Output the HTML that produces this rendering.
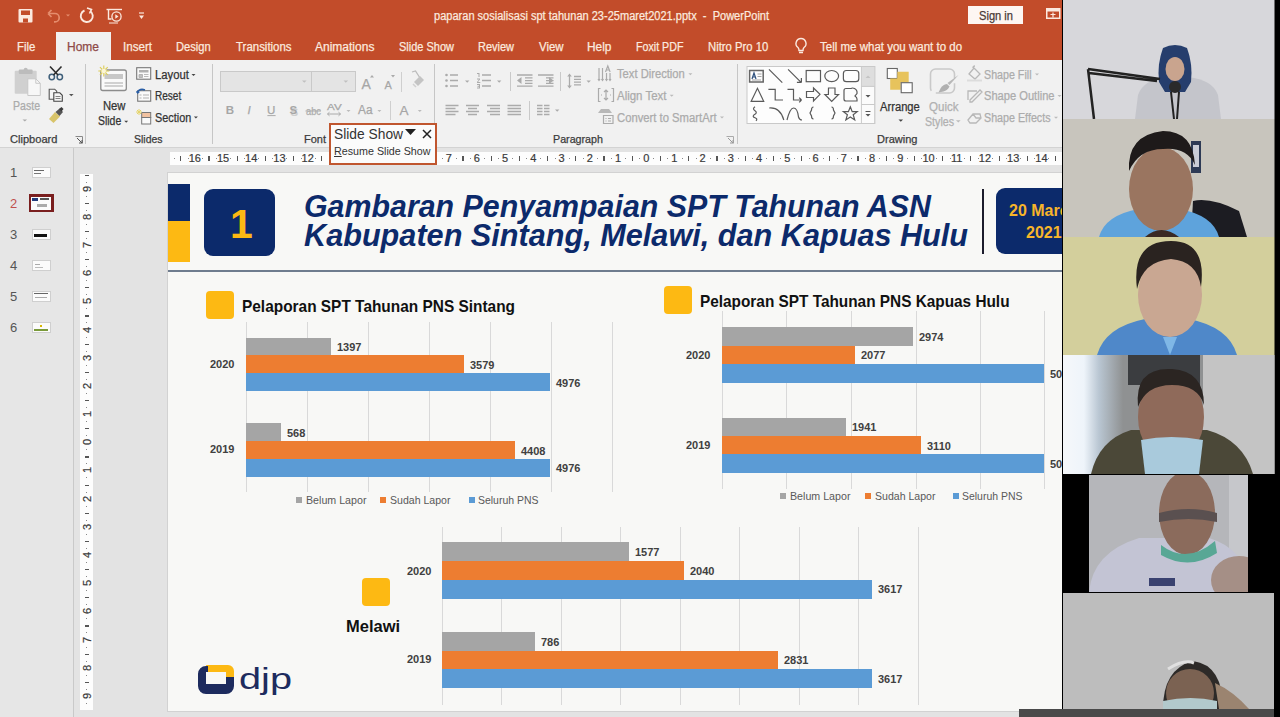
<!DOCTYPE html><html><head><meta charset="utf-8"><style>
*{margin:0;padding:0;box-sizing:border-box}
html,body{width:1280px;height:717px;overflow:hidden;background:#e3e3e3;font-family:"Liberation Sans",sans-serif}
.a{position:absolute}
.t{position:absolute;white-space:nowrap;line-height:1}
svg{position:absolute;overflow:visible}
</style></head><body><div class="a" style="left:0px;top:0px;width:1062px;height:60px;background:#c24c2a;"></div>
<svg style="left:0;top:0" width="160" height="30">
<rect x="18.5" y="9" width="14" height="13.5" rx="1" fill="#fbe9df"/>
<rect x="21" y="10.5" width="9" height="4.5" fill="#c24c2a"/>
<rect x="23" y="18.5" width="5" height="4" fill="#c24c2a"/>
<path d="M48 13.5 l3.5 -3.5 M48 13.5 l3.5 3.5 M48 13.5 h7 a4.2 4.2 0 0 1 0 8.4 h-1" stroke="#e58d6d" stroke-width="1.7" fill="none"/>
<path d="M66 14.5 l2 2 l2 -2z" fill="#e58d6d"/>
<path d="M84.5 10.5 a6 6 0 1 0 5.5 0.5" stroke="#fbe9df" stroke-width="1.9" fill="none"/>
<path d="M87 8 l4.5 1.5 l-2 4" stroke="#fbe9df" stroke-width="1.6" fill="none"/>
<path d="M106.5 9.5 h15.5" stroke="#fbe9df" stroke-width="1.4"/>
<path d="M108.5 10 v9 h3" stroke="#fbe9df" stroke-width="1.4" fill="none"/>
<circle cx="116.5" cy="16.5" r="4.6" stroke="#fbe9df" stroke-width="1.3" fill="none"/>
<path d="M115.3 14.2 l3.2 2.3 l-3.2 2.3z" fill="#fbe9df"/>
<path d="M109 23 h9" stroke="#fbe9df" stroke-width="1"/>
<path d="M139 13 h5" stroke="#fbe9df" stroke-width="1.2"/><path d="M139 15.5 l2.5 3.5 l2.5 -3.5z" fill="#fbe9df"/>
</svg>
<div class="t" style="left:434px;top:9.6px;font-size:12px;color:#fbe9df;font-weight:normal;font-style:normal;transform:scaleX(0.9200);transform-origin:0 0;-webkit-text-stroke:0.25px currentColor;">paparan sosialisasi spt tahunan 23-25maret2021.pptx&nbsp; -&nbsp; PowerPoint</div>
<div class="a" style="left:968px;top:6px;width:54.5px;height:17.5px;background:#fdf6f2;"></div>
<div class="t" style="left:978.5px;top:9.9px;font-size:12px;color:#4a3a36;font-weight:normal;font-style:normal;transform:scaleX(0.9267);transform-origin:0 0;-webkit-text-stroke:0.25px currentColor;">Sign in</div>
<svg style="left:1046px;top:8px" width="16" height="12"><rect x="0.75" y="0.75" width="13" height="9.5" fill="none" stroke="#fbe9df" stroke-width="1.5"/><rect x="0.5" y="0.5" width="13.5" height="3" fill="#fbe9df"/><path d="M4.5 6.5 h5 M7 4.5 v5" stroke="#fbe9df" stroke-width="1.2"/></svg>
<div class="a" style="left:56px;top:32px;width:55px;height:28px;background:#f1f1f1;"></div>
<div class="t" style="left:16.5px;top:40.7px;font-size:12px;color:#fbe9df;font-weight:normal;font-style:normal;transform:scaleX(0.9512);transform-origin:0 0;-webkit-text-stroke:0.25px currentColor;">File</div>
<div class="t" style="left:67.0px;top:40.7px;font-size:12px;color:#8e4a48;font-weight:normal;font-style:normal;transform:scaleX(0.9995);transform-origin:0 0;-webkit-text-stroke:0.25px currentColor;">Home</div>
<div class="t" style="left:122.9px;top:40.7px;font-size:12px;color:#fbe9df;font-weight:normal;font-style:normal;transform:scaleX(0.9667);transform-origin:0 0;-webkit-text-stroke:0.25px currentColor;">Insert</div>
<div class="t" style="left:176.1px;top:40.7px;font-size:12px;color:#fbe9df;font-weight:normal;font-style:normal;transform:scaleX(0.9288);transform-origin:0 0;-webkit-text-stroke:0.25px currentColor;">Design</div>
<div class="t" style="left:235.5px;top:40.7px;font-size:12px;color:#fbe9df;font-weight:normal;font-style:normal;transform:scaleX(0.9545);transform-origin:0 0;-webkit-text-stroke:0.25px currentColor;">Transitions</div>
<div class="t" style="left:315.1px;top:40.7px;font-size:12px;color:#fbe9df;font-weight:normal;font-style:normal;transform:scaleX(1.0007);transform-origin:0 0;-webkit-text-stroke:0.25px currentColor;">Animations</div>
<div class="t" style="left:398.5px;top:40.7px;font-size:12px;color:#fbe9df;font-weight:normal;font-style:normal;transform:scaleX(0.9162);transform-origin:0 0;-webkit-text-stroke:0.25px currentColor;">Slide Show</div>
<div class="t" style="left:477.5px;top:40.7px;font-size:12px;color:#fbe9df;font-weight:normal;font-style:normal;transform:scaleX(0.9146);transform-origin:0 0;-webkit-text-stroke:0.25px currentColor;">Review</div>
<div class="t" style="left:538.5px;top:40.7px;font-size:12px;color:#fbe9df;font-weight:normal;font-style:normal;transform:scaleX(0.9497);transform-origin:0 0;-webkit-text-stroke:0.25px currentColor;">View</div>
<div class="t" style="left:587.0px;top:40.7px;font-size:12px;color:#fbe9df;font-weight:normal;font-style:normal;transform:scaleX(0.9924);transform-origin:0 0;-webkit-text-stroke:0.25px currentColor;">Help</div>
<div class="t" style="left:636.1px;top:40.7px;font-size:12px;color:#fbe9df;font-weight:normal;font-style:normal;transform:scaleX(0.8888);transform-origin:0 0;-webkit-text-stroke:0.25px currentColor;">Foxit PDF</div>
<div class="t" style="left:708.2px;top:40.7px;font-size:12px;color:#fbe9df;font-weight:normal;font-style:normal;transform:scaleX(0.9420);transform-origin:0 0;-webkit-text-stroke:0.25px currentColor;">Nitro Pro 10</div>
<svg style="left:794px;top:37px" width="16" height="18"><path d="M7 1.5 a5 5 0 0 0 -3 9 q1 1 1 3 h4 q0 -2 1 -3 a5 5 0 0 0 -3 -9z M5 15.5 h4" stroke="#fbe9df" stroke-width="1.4" fill="none"/></svg>
<div class="t" style="left:820px;top:40.7px;font-size:12px;color:#fbe9df;font-weight:normal;font-style:normal;transform:scaleX(0.9593);transform-origin:0 0;-webkit-text-stroke:0.25px currentColor;">Tell me what you want to do</div>
<div class="a" style="left:0px;top:60px;width:1062px;height:87px;background:#f1f1f1;"></div>
<div class="a" style="left:0px;top:147px;width:1062px;height:1.5px;background:#d3d3d3;"></div>
<div class="a" style="left:85px;top:64px;width:1px;height:80px;background:#c6c6c6;"></div>
<div class="a" style="left:212px;top:64px;width:1px;height:80px;background:#c6c6c6;"></div>
<div class="a" style="left:434px;top:64px;width:1px;height:80px;background:#c6c6c6;"></div>
<div class="a" style="left:737px;top:64px;width:1px;height:80px;background:#c6c6c6;"></div>
<div class="t" style="left:10px;top:134.4px;font-size:11px;color:#3c3c3c;font-weight:normal;font-style:normal;transform:scaleX(1.0086);transform-origin:0 0;-webkit-text-stroke:0.25px currentColor;">Clipboard</div>
<div class="t" style="left:134px;top:134.4px;font-size:11px;color:#3c3c3c;font-weight:normal;font-style:normal;transform:scaleX(0.9510);transform-origin:0 0;-webkit-text-stroke:0.25px currentColor;">Slides</div>
<div class="t" style="left:304.4px;top:134.4px;font-size:11px;color:#3c3c3c;font-weight:normal;font-style:normal;transform:scaleX(0.9986);transform-origin:0 0;-webkit-text-stroke:0.25px currentColor;">Font</div>
<div class="t" style="left:553px;top:134.4px;font-size:11px;color:#3c3c3c;font-weight:normal;font-style:normal;transform:scaleX(0.9726);transform-origin:0 0;-webkit-text-stroke:0.25px currentColor;">Paragraph</div>
<div class="t" style="left:877.2px;top:134.4px;font-size:11px;color:#3c3c3c;font-weight:normal;font-style:normal;transform:scaleX(1.0039);transform-origin:0 0;-webkit-text-stroke:0.25px currentColor;">Drawing</div>
<svg style="left:75px;top:136px" width="9" height="9"><path d="M0.5 0.5 h7 v7" stroke="#888" fill="none"/><path d="M2 2 l5 5 M4 7 h3 v-3" stroke="#555" fill="none"/></svg>
<svg style="left:726px;top:136px" width="9" height="9"><path d="M0.5 0.5 h7 v7" stroke="#aaa" fill="none"/><path d="M2 2 l5 5 M4 7 h3 v-3" stroke="#999" fill="none"/></svg>
<svg style="left:0;top:0" width="90" height="130">
<rect x="14.7" y="70.7" width="22" height="23" rx="1" fill="#d0d0d0"/>
<rect x="18.8" y="69.5" width="13.8" height="4.5" rx="1" fill="#bcbcbc"/>
<circle cx="25.7" cy="69.8" r="2" fill="#bcbcbc"/>
<path d="M27.8 78.8 h8 l4.5 4.5 v12.2 h-12.5z" fill="#f7f7f7" stroke="#c8c8c8" stroke-width="1"/>
<path d="M35.8 78.8 v4.5 h4.5" fill="none" stroke="#c8c8c8"/>
<circle cx="51.8" cy="77" r="2.7" fill="none" stroke="#3f5f7a" stroke-width="1.5"/>
<circle cx="59.8" cy="77" r="2.7" fill="none" stroke="#3f5f7a" stroke-width="1.5"/>
<path d="M50 66.5 l8 8.5 M61.5 66.5 l-8 8.5" stroke="#2c2c2c" stroke-width="1.6"/>
<path d="M49.2 89.2 h5.5 l2 2 v8 h-7.5z" fill="#f5f5f5" stroke="#555" stroke-width="1.1"/>
<path d="M53.8 92.8 h6 l2.5 2.5 v6 h-8.5z" fill="#f5f5f5" stroke="#444" stroke-width="1.1"/>
<path d="M55.5 96.5 h5 M55.5 98.5 h5" stroke="#666" stroke-width="0.8"/>
<path d="M69 94 l2.3 2.3 l2.3 -2.3z" fill="#555"/>
<path d="M49 119 l6 -7 l5 4.5 l-6.5 6.5z" fill="#d8c46a"/>
<path d="M55.5 112 l4 -3.5 l3.5 3.5 l-3.5 4z" fill="#555"/>
<path d="M59 109 l2.5 -2 l2 2 l-2 2.5z" fill="#3a3a3a"/>
<path d="M22.5 119.6 l2.3 2 l2.3 -2z" fill="#aaa"/>
</svg>
<div class="t" style="left:12.8px;top:100.4px;font-size:12px;color:#ababab;font-weight:normal;font-style:normal;transform:scaleX(0.8803);transform-origin:0 0;-webkit-text-stroke:0.25px currentColor;">Paste</div>
<svg style="left:0;top:0" width="215" height="130">
<rect x="100.8" y="70" width="25.5" height="20.5" rx="2" fill="#fafafa" stroke="#8c8c8c" stroke-width="1.3"/>
<rect x="104.5" y="74" width="18.5" height="5" fill="#c8c8c8"/>
<path d="M104.5 83 h18.5 M104.5 86 h18.5" stroke="#a8a8a8" stroke-width="1"/>
<circle cx="103.8" cy="71" r="3" fill="#f2eec5"/>
<g stroke="#dccb55" stroke-width="1.1"><path d="M103.8 65.5 v11 M98.3 71 h11 M99.9 67.1 l7.8 7.8 M107.7 67.1 l-7.8 7.8"/></g>
<circle cx="103.8" cy="71" r="2.2" fill="#fbf6d8"/>
<rect x="136.7" y="67.7" width="14" height="11.5" fill="#fafafa" stroke="#777" stroke-width="1.1"/>
<rect x="139" y="70" width="9.5" height="2.5" fill="#b0b0b0"/>
<path d="M139 74.5 h3.5 v3 h-3.5z M144 74.5 h4.5 M144 76.5 h4.5" fill="#c0c0c0" stroke="#aaa" stroke-width="0.8"/>
<rect x="137.7" y="90.7" width="13" height="10.5" fill="#fafafa" stroke="#777" stroke-width="1.1"/>
<path d="M139.5 95 h2 M143 95 h6 M139.5 98 h2 M143 98 h6" stroke="#aaa" stroke-width="0.9"/>
<path d="M137 93 q2.5 -5 8 -3" stroke="#2a5ea5" stroke-width="1.6" fill="none"/>
<path d="M136 91 l1.5 3 l2.5 -2z" fill="#2a5ea5"/>
<rect x="141.7" y="112.5" width="9" height="5" fill="#f2c2a0" stroke="#777" stroke-width="1"/>
<rect x="141.7" y="117.5" width="9" height="6.5" fill="#fafafa" stroke="#777" stroke-width="1"/>
<g stroke="#e5d46a" stroke-width="1"><path d="M139 109 v6 M136 112 h6 M137 110 l4 4 M141 110 l-4 4"/></g>
<path d="M124.2 120.8 l2 2 l2 -2z M191.5 73.9 l2 2 l2 -2z M193.9 116.5 l2 2 l2 -2z" fill="#444"/>
</svg>
<div class="t" style="left:102.8px;top:99.9px;font-size:12px;color:#333;font-weight:normal;font-style:normal;transform:scaleX(0.9369);transform-origin:0 0;-webkit-text-stroke:0.25px currentColor;">New</div>
<div class="t" style="left:98px;top:115.1px;font-size:12px;color:#333;font-weight:normal;font-style:normal;transform:scaleX(0.8693);transform-origin:0 0;-webkit-text-stroke:0.25px currentColor;">Slide</div>
<div class="t" style="left:154.5px;top:68.6px;font-size:12px;color:#333;font-weight:normal;font-style:normal;transform:scaleX(0.9385);transform-origin:0 0;-webkit-text-stroke:0.25px currentColor;">Layout</div>
<div class="t" style="left:154.5px;top:90.0px;font-size:12px;color:#333;font-weight:normal;font-style:normal;transform:scaleX(0.8359);transform-origin:0 0;-webkit-text-stroke:0.25px currentColor;">Reset</div>
<div class="t" style="left:154.5px;top:111.8px;font-size:12px;color:#333;font-weight:normal;font-style:normal;transform:scaleX(0.9046);transform-origin:0 0;-webkit-text-stroke:0.25px currentColor;">Section</div>
<div class="a" style="left:220.4px;top:70.6px;width:92px;height:21.2px;background:#e4e4e4;border:1px solid #c9c9c9"></div>
<div class="a" style="left:311.4px;top:70.6px;width:44.2px;height:21.2px;background:#e4e4e4;border:1px solid #c9c9c9"></div>
<svg style="left:0;top:0" width="440" height="130">
<path d="M302 80.5 l2.3 2.3 l2.3 -2.3z M343.5 80.5 l2.3 2.3 l2.3 -2.3z" fill="#c0c0c0"/>
<path d="M370 77.5 l2 -2.5 l2 2.5z M391 75 l2 2.5 l2 -2.5z" fill="#aaa"/>
<path d="M412 72 l3.5 -1 l4.5 7" stroke="#bbb" stroke-width="1.3" fill="none"/>
<path d="M414 82 l6 -6 l4 4 l-6 6z" fill="#c4c4c4"/>
<path d="M413 84 l3 3" stroke="#d0d0d0" stroke-width="1.5"/>
<path d="M346.5 110 l2 2 l2 -2z M377.4 110 l2 2 l2 -2z M417.8 110 l2 2 l2 -2z" fill="#bbb"/>
<path d="M327.5 114 h13 M327.5 114 l2 -1.8 M327.5 114 l2 1.8 M340.5 114 l-2 -1.8 M340.5 114 l-2 1.8" stroke="#aaa" stroke-width="1" fill="none"/>
<path d="M267.4 115.6 h8.2" stroke="#aaa" stroke-width="1"/>
<path d="M305.5 111 h15.5" stroke="#aaa" stroke-width="1"/>
</svg>
<div class="t" style="left:361.5px;top:77.3px;font-size:14px;color:#a6a6a6;font-weight:normal;font-style:normal;-webkit-text-stroke:0.25px currentColor;">A</div>
<div class="t" style="left:384.5px;top:79.7px;font-size:11px;color:#a6a6a6;font-weight:normal;font-style:normal;-webkit-text-stroke:0.25px currentColor;">A</div>
<div class="a" style="left:401.4px;top:72px;width:1px;height:20px;background:#cfcfcf;"></div>
<div class="t" style="left:225.8px;top:104.8px;font-size:11.5px;color:#a6a6a6;font-weight:bold;font-style:normal;">B</div>
<div class="t" style="left:247.5px;top:104.8px;font-size:11.5px;color:#a6a6a6;font-weight:normal;font-style:italic;-webkit-text-stroke:0.25px currentColor;">I</div>
<div class="t" style="left:267px;top:104.8px;font-size:11.5px;color:#a6a6a6;font-weight:normal;font-style:normal;-webkit-text-stroke:0.25px currentColor;">U</div>
<div class="t" style="left:289.5px;top:104.8px;font-size:11.5px;color:#a6a6a6;font-weight:bold;font-style:normal;text-shadow:1px 1.5px 0 #cfcfcf;">S</div>
<div class="t" style="left:305.8px;top:105.6px;font-size:10.5px;color:#adadad;font-weight:normal;font-style:normal;transform:scaleX(0.8856);transform-origin:0 0;-webkit-text-stroke:0.25px currentColor;">abc</div>
<div class="t" style="left:326.7px;top:103.4px;font-size:9px;color:#a6a6a6;font-weight:normal;font-style:normal;transform:scaleX(1.2888);transform-origin:0 0;-webkit-text-stroke:0.25px currentColor;">AV</div>
<div class="t" style="left:357.5px;top:104.4px;font-size:12px;color:#a6a6a6;font-weight:normal;font-style:normal;transform:scaleX(0.9883);transform-origin:0 0;-webkit-text-stroke:0.25px currentColor;">Aa</div>
<div class="t" style="left:399.5px;top:104.0px;font-size:13.5px;color:#a6a6a6;font-weight:normal;font-style:normal;-webkit-text-stroke:0.25px currentColor;">A</div>
<div class="a" style="left:390.3px;top:101px;width:1px;height:19px;background:#cfcfcf;"></div>
<svg style="left:0;top:0" width="760" height="130" stroke="#ababab" fill="none">
<g stroke-width="1.3">
<path d="M450 75 h8 M450 80.5 h8 M450 86 h8"/>
<path d="M482 75 h9 M482 80.5 h9 M482 86 h9"/>
<path d="M517 75 h15.5 M525 77.8 h7.5 M525 80.6 h7.5 M525 83.4 h7.5 M517 86.2 h15.5"/>
<path d="M538 75 h15.5 M546 77.8 h7.5 M546 80.6 h7.5 M546 83.4 h7.5 M538 86.2 h15.5"/>
<path d="M574 76.5 h7 M574 79.3 h7 M574 82.1 h7 M574 84.9 h7 M569.5 75 v12"/>
<path d="M445.5 105.5 h13 M445.5 108.5 h10 M445.5 111.5 h13 M445.5 114.5 h10"/>
<path d="M466 105.5 h13 M468 108.5 h9 M466 111.5 h13 M468 114.5 h9"/>
<path d="M487 105.5 h13 M490 108.5 h10 M487 111.5 h13 M490 114.5 h10"/>
<path d="M507.5 105.5 h13.5 M507.5 108.5 h13.5 M507.5 111.5 h13.5 M507.5 114.5 h13.5"/>
<path d="M537 105.5 h5.5 M544 105.5 h5.5 M537 108.5 h5.5 M544 108.5 h5.5 M537 111.5 h5.5 M544 111.5 h5.5 M537 114.5 h5.5 M544 114.5 h5.5"/>
</g>
<g fill="#ababab" stroke="none">
<circle cx="446.5" cy="75" r="1.3"/><circle cx="446.5" cy="80.5" r="1.3"/><circle cx="446.5" cy="86" r="1.3"/>
<path d="M477 73 h2.5 v4 h-1 v-3 h-1.5z M477 78.5 h3 v1 l-2 2.5 h2.3 v1 h-3.3 v-1 l2 -2.5 h-2z M477 84 h3 v4.5 h-3 v-1 h2 v-0.8 h-1.5 v-0.9 h1.5 v-0.8 h-2z"/>
<path d="M517 80.6 l4.5 -3.5 v7z M553.5 80.6 l-4.5 -3.5 v7z"/>
<path d="M569.5 73.5 l-2.3 3 h4.6z M569.5 88.5 l-2.3 -3 h4.6z"/>
<path d="M465 80.5 l2.2 2.2 l2.2 -2.2z M497 80.5 l2.2 2.2 l2.2 -2.2z M586.5 80.5 l2.2 2.2 l2.2 -2.2z M555 109.5 l2.2 2.2 l2.2 -2.2z"/>
</g>
<g stroke="#c9c9c9" stroke-width="1"><path d="M510.5 72 v19 M560.5 72 v19 M529.5 101 v19"/></g>
<g stroke-width="1.2">
<path d="M599 68 v12 M602.5 68 v12 M606.5 73 v7 M610 73 v7"/>
<path d="M598 79 l1 1.5 l1 -1.5 M601.5 79 l1 1.5 l1 -1.5 M605.5 79 l1 1.5 l1 -1.5 M609 79 l1 1.5 l1 -1.5"/>
<path d="M605.5 72 l2.3 -6 l2.3 6 M606.3 70 h3"/>
<path d="M600.5 88.5 h-2 v13 h2 M611.5 88.5 h2 v13 h-2"/>
<path d="M606 90 v10 M604 92 l2 -2 l2 2 M604 98 l2 2 l2 -2 M601 95 h1 M610 95 h1"/>
<path d="M603.5 115.5 h9.5 v8 h-9.5z M605.5 118.5 h1 M608 118.5 h3 M605.5 121 h1 M608 121 h3"/>
</g>
<path d="M598 113 l3 -4 h8 l3 4z" fill="#b8b8b8" stroke="none"/>
<path d="M688.4 73.2 l2 2 l2 -2z M669.7 94.8 l2 2 l2 -2z M720 116.6 l2 2 l2 -2z" fill="#bbb" stroke="none"/>
</svg>
<div class="t" style="left:617px;top:68.4px;font-size:12px;color:#ababab;font-weight:normal;font-style:normal;transform:scaleX(0.9328);transform-origin:0 0;-webkit-text-stroke:0.25px currentColor;">Text Direction</div>
<div class="t" style="left:617.2px;top:90.1px;font-size:12px;color:#ababab;font-weight:normal;font-style:normal;transform:scaleX(0.9557);transform-origin:0 0;-webkit-text-stroke:0.25px currentColor;">Align Text</div>
<div class="t" style="left:617px;top:111.8px;font-size:12px;color:#ababab;font-weight:normal;font-style:normal;transform:scaleX(0.9387);transform-origin:0 0;-webkit-text-stroke:0.25px currentColor;">Convert to SmartArt</div>
<svg style="left:0;top:0" width="1062" height="130">
<rect x="747" y="66.5" width="127.7" height="57" fill="#fdfdfd" stroke="#c9c9c9"/>
<rect x="861.4" y="66.5" width="13.3" height="57" fill="#fbfbfb" stroke="#c9c9c9"/>
<rect x="862" y="67" width="12.2" height="19.4" fill="#dedede"/>
<path d="M861.4 86.4 h13.3 M861.4 104.5 h13.3" stroke="#c9c9c9"/>
<path d="M865.5 78 l2.5 -2.5 l2.5 2.5z" fill="#c4c4c4"/>
<path d="M865.5 95 l2.5 2.5 l2.5 -2.5z M865.5 114 l2.5 2.5 l2.5 -2.5z" fill="#555"/>
<path d="M865.5 111.5 h5" stroke="#555" stroke-width="1"/>
<g stroke="#5a5a5a" fill="none" stroke-width="1.2">
<rect x="749.6" y="70.5" width="13.6" height="11.5" stroke="#666" stroke-width="1.5"/>
<path d="M752 79 l2 -6 l2 6 M752.8 77 h2.5" stroke="#2d4f7c" stroke-width="1.2"/>
<path d="M757.5 74 h4 M757.5 76.5 h4 M752 80 h9" stroke="#999" stroke-width="0.9"/>
<path d="M769 69.4 l13.3 13.3"/>
<path d="M788.1 69.4 l13 13 M801.4 82.4 v-4.5 M801.4 82.4 h-4.5"/>
<rect x="806.2" y="70.5" width="14.3" height="11.2"/>
<ellipse cx="831.7" cy="76.1" rx="6.9" ry="5.6"/>
<rect x="843.4" y="70.5" width="15.4" height="11.2" rx="3"/>
<path d="M751.2 101.3 l6.25 -13 l6.25 13z"/>
<path d="M768.4 89.4 h6.8 v10.6 h7.8"/>
<path d="M787.5 89.4 h6 v10.6 h8 M801.5 100 l-2.3 -2.3 M801.5 100 l-2.3 2.3"/>
<path d="M806.5 91.5 h7 v-3.5 l6.5 6.3 l-6.5 6.7 v-3.5 h-7z"/>
<path d="M828.5 88 h6.5 v6.5 h3.5 l-6.8 6.8 l-6.8 -6.8 h3.5z"/>
<path d="M844 90.5 q0 -2 2 -2 h5 q1.5 -1 3.5 0 q3 1.5 2.5 5 l-2 2.5 q2 1.5 2 3 v2 h-11 q-2 0 -2 -2z"/>
<path d="M755 106.8 q-3 2 0 4 q3 2 -1 4 q-2 2 1 3 q3 1 1 3"/>
<path d="M769.2 108 q11 -1 14.6 12"/>
<path d="M787 120 q3 -12 6.5 -12 q4 0 5 9 q1 3 3.5 3"/>
<path d="M813.5 107 q-2 0 -2 3 l-1.5 3 l1.5 3 q0 3 2 3"/>
<path d="M831.5 107 q2 0 2 3 l1.5 3 l-1.5 3 q0 3 -2 3"/>
<path d="M850.3 106.8 l1.9 4.8 h5 l-4 3.1 l1.5 5.2 l-4.4 -3 l-4.4 3 l1.5 -5.2 l-4 -3.1 h5z"/>
</g>
<rect x="887.3" y="68.5" width="10" height="10" fill="#fff" stroke="#666" stroke-width="1.1"/>
<path d="M890.2 78.5 v11.2 h10.5 v-7 h8 v-11 h-11.4 v6.8z" fill="#e7c35c"/>
<rect x="901.2" y="82.7" width="11" height="10" fill="#fff" stroke="#666" stroke-width="1.1"/>
<path d="M898.5 119.5 l2.3 2.3 l2.3 -2.3z" fill="#444"/>
<rect x="930.5" y="69" width="24" height="24" rx="5" fill="none" stroke="#c9c9c9" stroke-width="1.6" stroke-dasharray="26 5"/>
<path d="M958.5 75 l-9 10 l-2 -2 z" fill="#b8b8b8"/>
<path d="M947 84 l2.5 2.5 q-2 4 -6 5 l-5 1 l2 -4 q2 -4 6.5 -4.5z" fill="#b0b0b0"/>
<path d="M956 120.3 l2.3 2.3 l2.3 -2.3z" fill="#bbb"/>
<g stroke="#b8b8b8" fill="none" stroke-width="1.3">
<path d="M969 74 l5 -6 l6 6 l-5 5z M973 68 q0 -2 2 -2"/>
<path d="M967 80.5 h15" stroke="#dcdcdc" stroke-width="2"/>
<path d="M968 100 v-9 h9 M970 100 l10 -10 l2 2 l-10 10 h-2z"/>
<path d="M968 120 l5 -6 h7 l1 4 l-5 5 h-6z M973 114 l3 4 h5"/>
</g>
<path d="M1035 73.5 l2 2 l2 -2z M1057.5 95 l2 2 l2 -2z M1054 116.8 l2 2 l2 -2z" fill="#bbb"/>
</svg>
<div class="t" style="left:880.2px;top:100.6px;font-size:12px;color:#333;font-weight:normal;font-style:normal;transform:scaleX(0.9324);transform-origin:0 0;-webkit-text-stroke:0.25px currentColor;">Arrange</div>
<div class="t" style="left:928.5px;top:100.6px;font-size:12px;color:#b0b0b0;font-weight:normal;font-style:normal;transform:scaleX(0.9618);transform-origin:0 0;-webkit-text-stroke:0.25px currentColor;">Quick</div>
<div class="t" style="left:924.7px;top:115.6px;font-size:12px;color:#b0b0b0;font-weight:normal;font-style:normal;transform:scaleX(0.8876);transform-origin:0 0;-webkit-text-stroke:0.25px currentColor;">Styles</div>
<div class="t" style="left:984px;top:69.0px;font-size:12px;color:#acacac;font-weight:normal;font-style:normal;transform:scaleX(0.8902);transform-origin:0 0;-webkit-text-stroke:0.25px currentColor;">Shape Fill</div>
<div class="t" style="left:984px;top:90.1px;font-size:12px;color:#acacac;font-weight:normal;font-style:normal;transform:scaleX(0.9273);transform-origin:0 0;-webkit-text-stroke:0.25px currentColor;">Shape Outline</div>
<div class="t" style="left:984px;top:111.8px;font-size:12px;color:#acacac;font-weight:normal;font-style:normal;transform:scaleX(0.8932);transform-origin:0 0;-webkit-text-stroke:0.25px currentColor;">Shape Effects</div>
<div class="a" style="left:0px;top:148px;width:73px;height:569px;background:#e6e6e6;"></div>
<div class="a" style="left:73px;top:148px;width:1px;height:569px;background:#c9c9c9;"></div>
<div class="a" style="left:74px;top:148px;width:988px;height:569px;background:#e3e3e3;"></div>
<div class="t" style="left:10px;top:165.6px;font-size:13px;color:#555;font-weight:normal;font-style:normal;">1</div>
<div class="a" style="left:32px;top:167px;width:19px;height:11px;background:#fbfbfb;border:1px solid #cfcfcf"></div>
<div class="a" style="left:34px;top:170px;width:10px;height:1px;background:#666;"></div>
<div class="a" style="left:34px;top:173px;width:7px;height:1px;background:#777;"></div>
<div class="t" style="left:10px;top:196.6px;font-size:13px;color:#c0504d;font-weight:normal;font-style:normal;">2</div>
<div class="a" style="left:28.5px;top:194px;width:25px;height:18px;background:#7a1f1f;"></div>
<div class="a" style="left:31px;top:196.5px;width:20px;height:13px;background:#fbfbfb;"></div>
<div class="a" style="left:32px;top:198px;width:6px;height:3px;background:#223b7a;"></div>
<div class="a" style="left:40px;top:198px;width:9px;height:2px;background:#555;"></div>
<div class="a" style="left:37px;top:204px;width:10px;height:3px;background:#aaa;"></div>
<div class="t" style="left:10px;top:227.6px;font-size:13px;color:#555;font-weight:normal;font-style:normal;">3</div>
<div class="a" style="left:32px;top:229px;width:19px;height:11px;background:#fbfbfb;border:1px solid #cfcfcf"></div>
<div class="a" style="left:34px;top:234px;width:13px;height:3px;background:#111;"></div>
<div class="t" style="left:10px;top:258.6px;font-size:13px;color:#555;font-weight:normal;font-style:normal;">4</div>
<div class="a" style="left:32px;top:260px;width:19px;height:11px;background:#fbfbfb;border:1px solid #cfcfcf"></div>
<div class="a" style="left:35px;top:264px;width:5px;height:1px;background:#aaa;"></div>
<div class="a" style="left:35px;top:267px;width:8px;height:1px;background:#bbb;"></div>
<div class="t" style="left:10px;top:289.6px;font-size:13px;color:#555;font-weight:normal;font-style:normal;">5</div>
<div class="a" style="left:32px;top:291px;width:19px;height:11px;background:#fbfbfb;border:1px solid #cfcfcf"></div>
<div class="a" style="left:34px;top:293px;width:14px;height:1px;background:#666;"></div>
<div class="a" style="left:35px;top:297px;width:12px;height:1px;background:#aaa;"></div>
<div class="t" style="left:10px;top:320.6px;font-size:13px;color:#555;font-weight:normal;font-style:normal;">6</div>
<div class="a" style="left:32px;top:322px;width:19px;height:11px;background:#fbfbfb;border:1px solid #cfcfcf"></div>
<div class="a" style="left:34px;top:329px;width:14px;height:2px;background:#7a9a3a;"></div>
<div class="a" style="left:40px;top:325px;width:2px;height:2px;background:#d9b800;"></div>
<div class="a" style="left:170px;top:152px;width:892px;height:13px;background:#fdfdfd;"></div>
<div class="a" style="left:173.5px;top:158px;width:1px;height:1px;background:#888"></div>
<div class="a" style="left:180.1px;top:156px;width:1.3px;height:4.5px;background:#555"></div>
<div class="a" style="left:187.6px;top:158px;width:1px;height:1px;background:#888"></div>
<div class="t" style="left:188.7px;top:153.3px;font-size:11px;color:#3a3a3a;width:12px;text-align:center;-webkit-text-stroke:0.2px #3a3a3a">16</div>
<div class="a" style="left:201.7px;top:158px;width:1px;height:1px;background:#888"></div>
<div class="a" style="left:208.3px;top:156px;width:1.3px;height:4.5px;background:#555"></div>
<div class="a" style="left:215.8px;top:158px;width:1px;height:1px;background:#888"></div>
<div class="t" style="left:216.9px;top:153.3px;font-size:11px;color:#3a3a3a;width:12px;text-align:center;-webkit-text-stroke:0.2px #3a3a3a">15</div>
<div class="a" style="left:230.0px;top:158px;width:1px;height:1px;background:#888"></div>
<div class="a" style="left:236.5px;top:156px;width:1.3px;height:4.5px;background:#555"></div>
<div class="a" style="left:244.1px;top:158px;width:1px;height:1px;background:#888"></div>
<div class="t" style="left:245.1px;top:153.3px;font-size:11px;color:#3a3a3a;width:12px;text-align:center;-webkit-text-stroke:0.2px #3a3a3a">14</div>
<div class="a" style="left:258.2px;top:158px;width:1px;height:1px;background:#888"></div>
<div class="a" style="left:264.7px;top:156px;width:1.3px;height:4.5px;background:#555"></div>
<div class="a" style="left:272.3px;top:158px;width:1px;height:1px;background:#888"></div>
<div class="t" style="left:273.3px;top:153.3px;font-size:11px;color:#3a3a3a;width:12px;text-align:center;-webkit-text-stroke:0.2px #3a3a3a">13</div>
<div class="a" style="left:286.4px;top:158px;width:1px;height:1px;background:#888"></div>
<div class="a" style="left:293.0px;top:156px;width:1.3px;height:4.5px;background:#555"></div>
<div class="a" style="left:300.5px;top:158px;width:1px;height:1px;background:#888"></div>
<div class="t" style="left:301.6px;top:153.3px;font-size:11px;color:#3a3a3a;width:12px;text-align:center;-webkit-text-stroke:0.2px #3a3a3a">12</div>
<div class="a" style="left:314.6px;top:158px;width:1px;height:1px;background:#888"></div>
<div class="a" style="left:321.2px;top:156px;width:1.3px;height:4.5px;background:#555"></div>
<div class="a" style="left:328.7px;top:158px;width:1px;height:1px;background:#888"></div>
<div class="t" style="left:329.8px;top:153.3px;font-size:11px;color:#3a3a3a;width:12px;text-align:center;-webkit-text-stroke:0.2px #3a3a3a">11</div>
<div class="a" style="left:342.8px;top:158px;width:1px;height:1px;background:#888"></div>
<div class="a" style="left:349.4px;top:156px;width:1.3px;height:4.5px;background:#555"></div>
<div class="a" style="left:356.9px;top:158px;width:1px;height:1px;background:#888"></div>
<div class="t" style="left:358.0px;top:153.3px;font-size:11px;color:#3a3a3a;width:12px;text-align:center;-webkit-text-stroke:0.2px #3a3a3a">10</div>
<div class="a" style="left:371.1px;top:158px;width:1px;height:1px;background:#888"></div>
<div class="a" style="left:377.6px;top:156px;width:1.3px;height:4.5px;background:#555"></div>
<div class="a" style="left:385.2px;top:158px;width:1px;height:1px;background:#888"></div>
<div class="t" style="left:386.2px;top:153.3px;font-size:11px;color:#3a3a3a;width:12px;text-align:center;-webkit-text-stroke:0.2px #3a3a3a">9</div>
<div class="a" style="left:399.3px;top:158px;width:1px;height:1px;background:#888"></div>
<div class="a" style="left:405.8px;top:156px;width:1.3px;height:4.5px;background:#555"></div>
<div class="a" style="left:413.4px;top:158px;width:1px;height:1px;background:#888"></div>
<div class="t" style="left:414.4px;top:153.3px;font-size:11px;color:#3a3a3a;width:12px;text-align:center;-webkit-text-stroke:0.2px #3a3a3a">8</div>
<div class="a" style="left:427.5px;top:158px;width:1px;height:1px;background:#888"></div>
<div class="a" style="left:434.1px;top:156px;width:1.3px;height:4.5px;background:#555"></div>
<div class="a" style="left:441.6px;top:158px;width:1px;height:1px;background:#888"></div>
<div class="t" style="left:442.7px;top:153.3px;font-size:11px;color:#3a3a3a;width:12px;text-align:center;-webkit-text-stroke:0.2px #3a3a3a">7</div>
<div class="a" style="left:455.7px;top:158px;width:1px;height:1px;background:#888"></div>
<div class="a" style="left:462.3px;top:156px;width:1.3px;height:4.5px;background:#555"></div>
<div class="a" style="left:469.8px;top:158px;width:1px;height:1px;background:#888"></div>
<div class="t" style="left:470.9px;top:153.3px;font-size:11px;color:#3a3a3a;width:12px;text-align:center;-webkit-text-stroke:0.2px #3a3a3a">6</div>
<div class="a" style="left:483.9px;top:158px;width:1px;height:1px;background:#888"></div>
<div class="a" style="left:490.5px;top:156px;width:1.3px;height:4.5px;background:#555"></div>
<div class="a" style="left:498.0px;top:158px;width:1px;height:1px;background:#888"></div>
<div class="t" style="left:499.1px;top:153.3px;font-size:11px;color:#3a3a3a;width:12px;text-align:center;-webkit-text-stroke:0.2px #3a3a3a">5</div>
<div class="a" style="left:512.2px;top:158px;width:1px;height:1px;background:#888"></div>
<div class="a" style="left:518.7px;top:156px;width:1.3px;height:4.5px;background:#555"></div>
<div class="a" style="left:526.3px;top:158px;width:1px;height:1px;background:#888"></div>
<div class="t" style="left:527.3px;top:153.3px;font-size:11px;color:#3a3a3a;width:12px;text-align:center;-webkit-text-stroke:0.2px #3a3a3a">4</div>
<div class="a" style="left:540.4px;top:158px;width:1px;height:1px;background:#888"></div>
<div class="a" style="left:546.9px;top:156px;width:1.3px;height:4.5px;background:#555"></div>
<div class="a" style="left:554.5px;top:158px;width:1px;height:1px;background:#888"></div>
<div class="t" style="left:555.5px;top:153.3px;font-size:11px;color:#3a3a3a;width:12px;text-align:center;-webkit-text-stroke:0.2px #3a3a3a">3</div>
<div class="a" style="left:568.6px;top:158px;width:1px;height:1px;background:#888"></div>
<div class="a" style="left:575.2px;top:156px;width:1.3px;height:4.5px;background:#555"></div>
<div class="a" style="left:582.7px;top:158px;width:1px;height:1px;background:#888"></div>
<div class="t" style="left:583.8px;top:153.3px;font-size:11px;color:#3a3a3a;width:12px;text-align:center;-webkit-text-stroke:0.2px #3a3a3a">2</div>
<div class="a" style="left:596.8px;top:158px;width:1px;height:1px;background:#888"></div>
<div class="a" style="left:603.4px;top:156px;width:1.3px;height:4.5px;background:#555"></div>
<div class="a" style="left:610.9px;top:158px;width:1px;height:1px;background:#888"></div>
<div class="t" style="left:612.0px;top:153.3px;font-size:11px;color:#3a3a3a;width:12px;text-align:center;-webkit-text-stroke:0.2px #3a3a3a">1</div>
<div class="a" style="left:625.0px;top:158px;width:1px;height:1px;background:#888"></div>
<div class="a" style="left:631.6px;top:156px;width:1.3px;height:4.5px;background:#555"></div>
<div class="a" style="left:639.1px;top:158px;width:1px;height:1px;background:#888"></div>
<div class="t" style="left:640.2px;top:153.3px;font-size:11px;color:#3a3a3a;width:12px;text-align:center;-webkit-text-stroke:0.2px #3a3a3a">0</div>
<div class="a" style="left:653.3px;top:158px;width:1px;height:1px;background:#888"></div>
<div class="a" style="left:659.8px;top:156px;width:1.3px;height:4.5px;background:#555"></div>
<div class="a" style="left:667.4px;top:158px;width:1px;height:1px;background:#888"></div>
<div class="t" style="left:668.4px;top:153.3px;font-size:11px;color:#3a3a3a;width:12px;text-align:center;-webkit-text-stroke:0.2px #3a3a3a">1</div>
<div class="a" style="left:681.5px;top:158px;width:1px;height:1px;background:#888"></div>
<div class="a" style="left:688.0px;top:156px;width:1.3px;height:4.5px;background:#555"></div>
<div class="a" style="left:695.6px;top:158px;width:1px;height:1px;background:#888"></div>
<div class="t" style="left:696.6px;top:153.3px;font-size:11px;color:#3a3a3a;width:12px;text-align:center;-webkit-text-stroke:0.2px #3a3a3a">2</div>
<div class="a" style="left:709.7px;top:158px;width:1px;height:1px;background:#888"></div>
<div class="a" style="left:716.3px;top:156px;width:1.3px;height:4.5px;background:#555"></div>
<div class="a" style="left:723.8px;top:158px;width:1px;height:1px;background:#888"></div>
<div class="t" style="left:724.9px;top:153.3px;font-size:11px;color:#3a3a3a;width:12px;text-align:center;-webkit-text-stroke:0.2px #3a3a3a">3</div>
<div class="a" style="left:737.9px;top:158px;width:1px;height:1px;background:#888"></div>
<div class="a" style="left:744.5px;top:156px;width:1.3px;height:4.5px;background:#555"></div>
<div class="a" style="left:752.0px;top:158px;width:1px;height:1px;background:#888"></div>
<div class="t" style="left:753.1px;top:153.3px;font-size:11px;color:#3a3a3a;width:12px;text-align:center;-webkit-text-stroke:0.2px #3a3a3a">4</div>
<div class="a" style="left:766.1px;top:158px;width:1px;height:1px;background:#888"></div>
<div class="a" style="left:772.7px;top:156px;width:1.3px;height:4.5px;background:#555"></div>
<div class="a" style="left:780.2px;top:158px;width:1px;height:1px;background:#888"></div>
<div class="t" style="left:781.3px;top:153.3px;font-size:11px;color:#3a3a3a;width:12px;text-align:center;-webkit-text-stroke:0.2px #3a3a3a">5</div>
<div class="a" style="left:794.4px;top:158px;width:1px;height:1px;background:#888"></div>
<div class="a" style="left:800.9px;top:156px;width:1.3px;height:4.5px;background:#555"></div>
<div class="a" style="left:808.5px;top:158px;width:1px;height:1px;background:#888"></div>
<div class="t" style="left:809.5px;top:153.3px;font-size:11px;color:#3a3a3a;width:12px;text-align:center;-webkit-text-stroke:0.2px #3a3a3a">6</div>
<div class="a" style="left:822.6px;top:158px;width:1px;height:1px;background:#888"></div>
<div class="a" style="left:829.1px;top:156px;width:1.3px;height:4.5px;background:#555"></div>
<div class="a" style="left:836.7px;top:158px;width:1px;height:1px;background:#888"></div>
<div class="t" style="left:837.7px;top:153.3px;font-size:11px;color:#3a3a3a;width:12px;text-align:center;-webkit-text-stroke:0.2px #3a3a3a">7</div>
<div class="a" style="left:850.8px;top:158px;width:1px;height:1px;background:#888"></div>
<div class="a" style="left:857.4px;top:156px;width:1.3px;height:4.5px;background:#555"></div>
<div class="a" style="left:864.9px;top:158px;width:1px;height:1px;background:#888"></div>
<div class="t" style="left:866.0px;top:153.3px;font-size:11px;color:#3a3a3a;width:12px;text-align:center;-webkit-text-stroke:0.2px #3a3a3a">8</div>
<div class="a" style="left:879.0px;top:158px;width:1px;height:1px;background:#888"></div>
<div class="a" style="left:885.6px;top:156px;width:1.3px;height:4.5px;background:#555"></div>
<div class="a" style="left:893.1px;top:158px;width:1px;height:1px;background:#888"></div>
<div class="t" style="left:894.2px;top:153.3px;font-size:11px;color:#3a3a3a;width:12px;text-align:center;-webkit-text-stroke:0.2px #3a3a3a">9</div>
<div class="a" style="left:907.2px;top:158px;width:1px;height:1px;background:#888"></div>
<div class="a" style="left:913.8px;top:156px;width:1.3px;height:4.5px;background:#555"></div>
<div class="a" style="left:921.3px;top:158px;width:1px;height:1px;background:#888"></div>
<div class="t" style="left:922.4px;top:153.3px;font-size:11px;color:#3a3a3a;width:12px;text-align:center;-webkit-text-stroke:0.2px #3a3a3a">10</div>
<div class="a" style="left:935.5px;top:158px;width:1px;height:1px;background:#888"></div>
<div class="a" style="left:942.0px;top:156px;width:1.3px;height:4.5px;background:#555"></div>
<div class="a" style="left:949.6px;top:158px;width:1px;height:1px;background:#888"></div>
<div class="t" style="left:950.6px;top:153.3px;font-size:11px;color:#3a3a3a;width:12px;text-align:center;-webkit-text-stroke:0.2px #3a3a3a">11</div>
<div class="a" style="left:963.7px;top:158px;width:1px;height:1px;background:#888"></div>
<div class="a" style="left:970.2px;top:156px;width:1.3px;height:4.5px;background:#555"></div>
<div class="a" style="left:977.8px;top:158px;width:1px;height:1px;background:#888"></div>
<div class="t" style="left:978.8px;top:153.3px;font-size:11px;color:#3a3a3a;width:12px;text-align:center;-webkit-text-stroke:0.2px #3a3a3a">12</div>
<div class="a" style="left:991.9px;top:158px;width:1px;height:1px;background:#888"></div>
<div class="a" style="left:998.5px;top:156px;width:1.3px;height:4.5px;background:#555"></div>
<div class="a" style="left:1006.0px;top:158px;width:1px;height:1px;background:#888"></div>
<div class="t" style="left:1007.1px;top:153.3px;font-size:11px;color:#3a3a3a;width:12px;text-align:center;-webkit-text-stroke:0.2px #3a3a3a">13</div>
<div class="a" style="left:1020.1px;top:158px;width:1px;height:1px;background:#888"></div>
<div class="a" style="left:1026.7px;top:156px;width:1.3px;height:4.5px;background:#555"></div>
<div class="a" style="left:1034.2px;top:158px;width:1px;height:1px;background:#888"></div>
<div class="t" style="left:1035.3px;top:153.3px;font-size:11px;color:#3a3a3a;width:12px;text-align:center;-webkit-text-stroke:0.2px #3a3a3a">14</div>
<div class="a" style="left:1048.3px;top:158px;width:1px;height:1px;background:#888"></div>
<div class="a" style="left:1054.9px;top:156px;width:1.3px;height:4.5px;background:#555"></div>
<div class="a" style="left:80px;top:174px;width:13px;height:536px;background:#fdfdfd;"></div>
<div class="a" style="left:84.5px;top:174.5px;width:4.5px;height:1.3px;background:#555;"></div>
<div class="a" style="left:86px;top:182px;width:1px;height:1px;background:#888;"></div>
<div class="t" style="left:86.5px;top:188.6px;font-size:11px;color:#3a3a3a;-webkit-text-stroke:0.2px #3a3a3a;transform:translate(-50%,-50%) rotate(-90deg)">9</div>
<div class="a" style="left:86px;top:196px;width:1px;height:1px;background:#888;"></div>
<div class="a" style="left:84.5px;top:202.7px;width:4.5px;height:1.3px;background:#555;"></div>
<div class="a" style="left:86px;top:210px;width:1px;height:1px;background:#888;"></div>
<div class="t" style="left:86.5px;top:216.8px;font-size:11px;color:#3a3a3a;-webkit-text-stroke:0.2px #3a3a3a;transform:translate(-50%,-50%) rotate(-90deg)">8</div>
<div class="a" style="left:86px;top:224px;width:1px;height:1px;background:#888;"></div>
<div class="a" style="left:84.5px;top:230.8px;width:4.5px;height:1.3px;background:#555;"></div>
<div class="a" style="left:86px;top:238px;width:1px;height:1px;background:#888;"></div>
<div class="t" style="left:86.5px;top:244.9px;font-size:11px;color:#3a3a3a;-webkit-text-stroke:0.2px #3a3a3a;transform:translate(-50%,-50%) rotate(-90deg)">7</div>
<div class="a" style="left:86px;top:252px;width:1px;height:1px;background:#888;"></div>
<div class="a" style="left:84.5px;top:259.0px;width:4.5px;height:1.3px;background:#555;"></div>
<div class="a" style="left:86px;top:266px;width:1px;height:1px;background:#888;"></div>
<div class="t" style="left:86.5px;top:273.1px;font-size:11px;color:#3a3a3a;-webkit-text-stroke:0.2px #3a3a3a;transform:translate(-50%,-50%) rotate(-90deg)">6</div>
<div class="a" style="left:86px;top:280px;width:1px;height:1px;background:#888;"></div>
<div class="a" style="left:84.5px;top:287.2px;width:4.5px;height:1.3px;background:#555;"></div>
<div class="a" style="left:86px;top:294px;width:1px;height:1px;background:#888;"></div>
<div class="t" style="left:86.5px;top:301.3px;font-size:11px;color:#3a3a3a;-webkit-text-stroke:0.2px #3a3a3a;transform:translate(-50%,-50%) rotate(-90deg)">5</div>
<div class="a" style="left:86px;top:308px;width:1px;height:1px;background:#888;"></div>
<div class="a" style="left:84.5px;top:315.4px;width:4.5px;height:1.3px;background:#555;"></div>
<div class="a" style="left:86px;top:322px;width:1px;height:1px;background:#888;"></div>
<div class="t" style="left:86.5px;top:329.5px;font-size:11px;color:#3a3a3a;-webkit-text-stroke:0.2px #3a3a3a;transform:translate(-50%,-50%) rotate(-90deg)">4</div>
<div class="a" style="left:86px;top:337px;width:1px;height:1px;background:#888;"></div>
<div class="a" style="left:84.5px;top:343.6px;width:4.5px;height:1.3px;background:#555;"></div>
<div class="a" style="left:86px;top:351px;width:1px;height:1px;background:#888;"></div>
<div class="t" style="left:86.5px;top:357.7px;font-size:11px;color:#3a3a3a;-webkit-text-stroke:0.2px #3a3a3a;transform:translate(-50%,-50%) rotate(-90deg)">3</div>
<div class="a" style="left:86px;top:365px;width:1px;height:1px;background:#888;"></div>
<div class="a" style="left:84.5px;top:371.7px;width:4.5px;height:1.3px;background:#555;"></div>
<div class="a" style="left:86px;top:379px;width:1px;height:1px;background:#888;"></div>
<div class="t" style="left:86.5px;top:385.8px;font-size:11px;color:#3a3a3a;-webkit-text-stroke:0.2px #3a3a3a;transform:translate(-50%,-50%) rotate(-90deg)">2</div>
<div class="a" style="left:86px;top:393px;width:1px;height:1px;background:#888;"></div>
<div class="a" style="left:84.5px;top:399.9px;width:4.5px;height:1.3px;background:#555;"></div>
<div class="a" style="left:86px;top:407px;width:1px;height:1px;background:#888;"></div>
<div class="t" style="left:86.5px;top:414.0px;font-size:11px;color:#3a3a3a;-webkit-text-stroke:0.2px #3a3a3a;transform:translate(-50%,-50%) rotate(-90deg)">1</div>
<div class="a" style="left:86px;top:421px;width:1px;height:1px;background:#888;"></div>
<div class="a" style="left:84.5px;top:428.1px;width:4.5px;height:1.3px;background:#555;"></div>
<div class="a" style="left:86px;top:435px;width:1px;height:1px;background:#888;"></div>
<div class="t" style="left:86.5px;top:442.2px;font-size:11px;color:#3a3a3a;-webkit-text-stroke:0.2px #3a3a3a;transform:translate(-50%,-50%) rotate(-90deg)">0</div>
<div class="a" style="left:86px;top:449px;width:1px;height:1px;background:#888;"></div>
<div class="a" style="left:84.5px;top:456.3px;width:4.5px;height:1.3px;background:#555;"></div>
<div class="a" style="left:86px;top:463px;width:1px;height:1px;background:#888;"></div>
<div class="t" style="left:86.5px;top:470.4px;font-size:11px;color:#3a3a3a;-webkit-text-stroke:0.2px #3a3a3a;transform:translate(-50%,-50%) rotate(-90deg)">1</div>
<div class="a" style="left:86px;top:477px;width:1px;height:1px;background:#888;"></div>
<div class="a" style="left:84.5px;top:484.5px;width:4.5px;height:1.3px;background:#555;"></div>
<div class="a" style="left:86px;top:492px;width:1px;height:1px;background:#888;"></div>
<div class="t" style="left:86.5px;top:498.6px;font-size:11px;color:#3a3a3a;-webkit-text-stroke:0.2px #3a3a3a;transform:translate(-50%,-50%) rotate(-90deg)">2</div>
<div class="a" style="left:86px;top:506px;width:1px;height:1px;background:#888;"></div>
<div class="a" style="left:84.5px;top:512.6px;width:4.5px;height:1.3px;background:#555;"></div>
<div class="a" style="left:86px;top:520px;width:1px;height:1px;background:#888;"></div>
<div class="t" style="left:86.5px;top:526.7px;font-size:11px;color:#3a3a3a;-webkit-text-stroke:0.2px #3a3a3a;transform:translate(-50%,-50%) rotate(-90deg)">3</div>
<div class="a" style="left:86px;top:534px;width:1px;height:1px;background:#888;"></div>
<div class="a" style="left:84.5px;top:540.8px;width:4.5px;height:1.3px;background:#555;"></div>
<div class="a" style="left:86px;top:548px;width:1px;height:1px;background:#888;"></div>
<div class="t" style="left:86.5px;top:554.9px;font-size:11px;color:#3a3a3a;-webkit-text-stroke:0.2px #3a3a3a;transform:translate(-50%,-50%) rotate(-90deg)">4</div>
<div class="a" style="left:86px;top:562px;width:1px;height:1px;background:#888;"></div>
<div class="a" style="left:84.5px;top:569.0px;width:4.5px;height:1.3px;background:#555;"></div>
<div class="a" style="left:86px;top:576px;width:1px;height:1px;background:#888;"></div>
<div class="t" style="left:86.5px;top:583.1px;font-size:11px;color:#3a3a3a;-webkit-text-stroke:0.2px #3a3a3a;transform:translate(-50%,-50%) rotate(-90deg)">5</div>
<div class="a" style="left:86px;top:590px;width:1px;height:1px;background:#888;"></div>
<div class="a" style="left:84.5px;top:597.2px;width:4.5px;height:1.3px;background:#555;"></div>
<div class="a" style="left:86px;top:604px;width:1px;height:1px;background:#888;"></div>
<div class="t" style="left:86.5px;top:611.3px;font-size:11px;color:#3a3a3a;-webkit-text-stroke:0.2px #3a3a3a;transform:translate(-50%,-50%) rotate(-90deg)">6</div>
<div class="a" style="left:86px;top:618px;width:1px;height:1px;background:#888;"></div>
<div class="a" style="left:84.5px;top:625.4px;width:4.5px;height:1.3px;background:#555;"></div>
<div class="a" style="left:86px;top:632px;width:1px;height:1px;background:#888;"></div>
<div class="t" style="left:86.5px;top:639.5px;font-size:11px;color:#3a3a3a;-webkit-text-stroke:0.2px #3a3a3a;transform:translate(-50%,-50%) rotate(-90deg)">7</div>
<div class="a" style="left:86px;top:647px;width:1px;height:1px;background:#888;"></div>
<div class="a" style="left:84.5px;top:653.6px;width:4.5px;height:1.3px;background:#555;"></div>
<div class="a" style="left:86px;top:661px;width:1px;height:1px;background:#888;"></div>
<div class="t" style="left:86.5px;top:667.6px;font-size:11px;color:#3a3a3a;-webkit-text-stroke:0.2px #3a3a3a;transform:translate(-50%,-50%) rotate(-90deg)">8</div>
<div class="a" style="left:86px;top:675px;width:1px;height:1px;background:#888;"></div>
<div class="a" style="left:84.5px;top:681.7px;width:4.5px;height:1.3px;background:#555;"></div>
<div class="a" style="left:86px;top:689px;width:1px;height:1px;background:#888;"></div>
<div class="t" style="left:86.5px;top:695.8px;font-size:11px;color:#3a3a3a;-webkit-text-stroke:0.2px #3a3a3a;transform:translate(-50%,-50%) rotate(-90deg)">9</div>
<div class="a" style="left:86px;top:703px;width:1px;height:1px;background:#888;"></div>
<div class="a" style="left:167px;top:172px;width:895px;height:540px;background:#d2d2d2;"></div>
<div class="a" style="left:168px;top:173px;width:894px;height:538px;background:#f8f8f6;"></div>
<div class="a" style="left:168px;top:184px;width:22px;height:37px;background:#0c2a6b;"></div>
<div class="a" style="left:168px;top:221px;width:22px;height:41px;background:#fdb913;"></div>
<div class="a" style="left:204px;top:189px;width:71px;height:67px;background:#0c2a6b;border-radius:9px"></div>
<div class="t" style="left:230px;top:204.2px;font-size:41px;color:#fdb913;font-weight:bold;font-style:normal;">1</div>
<div class="t" style="left:304px;top:190.6px;font-size:30.5px;color:#0c2a6b;font-weight:bold;font-style:italic;transform:scaleX(0.9953);transform-origin:0 0;">Gambaran Penyampaian SPT Tahunan ASN</div>
<div class="t" style="left:304px;top:219.6px;font-size:30.5px;color:#0c2a6b;font-weight:bold;font-style:italic;transform:scaleX(1.0048);transform-origin:0 0;">Kabupaten Sintang, Melawi, dan Kapuas Hulu</div>
<div class="a" style="left:982px;top:189px;width:2px;height:65px;background:#1c1c2c;"></div>
<div class="a" style="left:996px;top:188px;width:80px;height:66px;background:#0c2a6b;border-radius:9px"></div>
<div class="t" style="left:1009px;top:203.2px;font-size:16px;color:#f7b52a;font-weight:bold;font-style:normal;">20 Maret</div>
<div class="t" style="left:1026px;top:225.2px;font-size:16px;color:#f7b52a;font-weight:bold;font-style:normal;">2021</div>
<div class="a" style="left:168px;top:270px;width:894px;height:2px;background:#6f7c8e;"></div>
<div class="a" style="left:206px;top:291px;width:28px;height:28px;background:#fdb913;border-radius:4px"></div>
<div class="t" style="left:241.5px;top:297.9px;font-size:16.4px;color:#111;font-weight:bold;font-style:normal;transform:scaleX(0.9407);transform-origin:0 0;">Pelaporan SPT Tahunan PNS Sintang</div>
<div class="a" style="left:246px;top:322px;width:1px;height:170px;background:#d9d9d9;"></div>
<div class="a" style="left:307px;top:322px;width:1px;height:170px;background:#d9d9d9;"></div>
<div class="a" style="left:368px;top:322px;width:1px;height:170px;background:#d9d9d9;"></div>
<div class="a" style="left:429px;top:322px;width:1px;height:170px;background:#d9d9d9;"></div>
<div class="a" style="left:490px;top:322px;width:1px;height:170px;background:#d9d9d9;"></div>
<div class="a" style="left:551px;top:322px;width:1px;height:170px;background:#d9d9d9;"></div>
<div class="a" style="left:612px;top:322px;width:1px;height:170px;background:#d9d9d9;"></div>
<div class="a" style="left:246px;top:338px;width:85px;height:18px;background:#a5a5a5;"></div>
<div class="t" style="left:337px;top:342.2px;font-size:11px;color:#404040;font-weight:bold;font-style:normal;">1397</div>
<div class="a" style="left:246px;top:355px;width:218px;height:18px;background:#ed7d31;"></div>
<div class="t" style="left:470px;top:360.0px;font-size:11px;color:#404040;font-weight:bold;font-style:normal;">3579</div>
<div class="a" style="left:246px;top:373px;width:304px;height:18px;background:#5b9bd5;"></div>
<div class="t" style="left:556px;top:377.8px;font-size:11px;color:#404040;font-weight:bold;font-style:normal;">4976</div>
<div class="a" style="left:246px;top:423px;width:35px;height:18px;background:#a5a5a5;"></div>
<div class="t" style="left:287px;top:427.7px;font-size:11px;color:#404040;font-weight:bold;font-style:normal;">568</div>
<div class="a" style="left:246px;top:441px;width:269px;height:18px;background:#ed7d31;"></div>
<div class="t" style="left:521px;top:445.5px;font-size:11px;color:#404040;font-weight:bold;font-style:normal;">4408</div>
<div class="a" style="left:246px;top:459px;width:304px;height:18px;background:#5b9bd5;"></div>
<div class="t" style="left:556px;top:463.3px;font-size:11px;color:#404040;font-weight:bold;font-style:normal;">4976</div>
<div class="t" style="left:210px;top:358.7px;font-size:11px;color:#404040;font-weight:bold;font-style:normal;">2020</div>
<div class="t" style="left:210px;top:444.2px;font-size:11px;color:#404040;font-weight:bold;font-style:normal;">2019</div>
<div class="a" style="left:296px;top:496.5px;width:6px;height:6px;background:#a5a5a5;"></div>
<div class="t" style="left:305.5px;top:494.7px;font-size:11px;color:#595959;font-weight:normal;font-style:normal;transform:scaleX(0.9695);transform-origin:0 0;">Belum Lapor</div>
<div class="a" style="left:380px;top:496.5px;width:6px;height:6px;background:#ed7d31;"></div>
<div class="t" style="left:390px;top:494.7px;font-size:11px;color:#595959;font-weight:normal;font-style:normal;transform:scaleX(0.9594);transform-origin:0 0;">Sudah Lapor</div>
<div class="a" style="left:468.5px;top:496.5px;width:6px;height:6px;background:#5b9bd5;"></div>
<div class="t" style="left:478px;top:494.7px;font-size:11px;color:#595959;font-weight:normal;font-style:normal;transform:scaleX(0.9509);transform-origin:0 0;">Seluruh PNS</div>
<div class="a" style="left:664px;top:286px;width:28px;height:28px;background:#fdb913;border-radius:4px"></div>
<div class="t" style="left:700px;top:292.9px;font-size:16.4px;color:#111;font-weight:bold;font-style:normal;transform:scaleX(0.9371);transform-origin:0 0;">Pelaporan SPT Tahunan PNS Kapuas Hulu</div>
<div class="a" style="left:722px;top:311px;width:1px;height:178px;background:#d9d9d9;"></div>
<div class="a" style="left:786px;top:311px;width:1px;height:178px;background:#d9d9d9;"></div>
<div class="a" style="left:851px;top:311px;width:1px;height:178px;background:#d9d9d9;"></div>
<div class="a" style="left:916px;top:311px;width:1px;height:178px;background:#d9d9d9;"></div>
<div class="a" style="left:980px;top:311px;width:1px;height:178px;background:#d9d9d9;"></div>
<div class="a" style="left:1044px;top:311px;width:1px;height:178px;background:#d9d9d9;"></div>
<div class="a" style="left:722px;top:327px;width:191px;height:18.5px;background:#a5a5a5;"></div>
<div class="t" style="left:919px;top:331.7px;font-size:11px;color:#404040;font-weight:bold;font-style:normal;">2974</div>
<div class="a" style="left:722px;top:346px;width:133px;height:18.5px;background:#ed7d31;"></div>
<div class="t" style="left:861px;top:350.2px;font-size:11px;color:#404040;font-weight:bold;font-style:normal;">2077</div>
<div class="a" style="left:722px;top:364px;width:322px;height:18.5px;background:#5b9bd5;"></div>
<div class="t" style="left:1050px;top:368.7px;font-size:11px;color:#404040;font-weight:bold;font-style:normal;">5020</div>
<div class="a" style="left:722px;top:418px;width:124px;height:18.5px;background:#a5a5a5;"></div>
<div class="t" style="left:852px;top:422.2px;font-size:11px;color:#404040;font-weight:bold;font-style:normal;">1941</div>
<div class="a" style="left:722px;top:436px;width:199px;height:18.5px;background:#ed7d31;"></div>
<div class="t" style="left:927px;top:440.7px;font-size:11px;color:#404040;font-weight:bold;font-style:normal;">3110</div>
<div class="a" style="left:722px;top:454px;width:322px;height:18.5px;background:#5b9bd5;"></div>
<div class="t" style="left:1050px;top:459.2px;font-size:11px;color:#404040;font-weight:bold;font-style:normal;">5020</div>
<div class="t" style="left:686px;top:350.2px;font-size:11px;color:#404040;font-weight:bold;font-style:normal;">2020</div>
<div class="t" style="left:686px;top:440.2px;font-size:11px;color:#404040;font-weight:bold;font-style:normal;">2019</div>
<div class="a" style="left:779.5px;top:492.5px;width:6px;height:6px;background:#a5a5a5;"></div>
<div class="t" style="left:789.5px;top:490.7px;font-size:11px;color:#595959;font-weight:normal;font-style:normal;transform:scaleX(0.9695);transform-origin:0 0;">Belum Lapor</div>
<div class="a" style="left:864.5px;top:492.5px;width:6px;height:6px;background:#ed7d31;"></div>
<div class="t" style="left:874.5px;top:490.7px;font-size:11px;color:#595959;font-weight:normal;font-style:normal;transform:scaleX(0.9594);transform-origin:0 0;">Sudah Lapor</div>
<div class="a" style="left:952.5px;top:492.5px;width:6px;height:6px;background:#5b9bd5;"></div>
<div class="t" style="left:961.5px;top:490.7px;font-size:11px;color:#595959;font-weight:normal;font-style:normal;transform:scaleX(0.9509);transform-origin:0 0;">Seluruh PNS</div>
<div class="a" style="left:362px;top:578px;width:28px;height:28px;background:#fdb913;border-radius:4px"></div>
<div class="t" style="left:346px;top:617.8px;font-size:16.5px;color:#111;font-weight:bold;font-style:normal;">Melawi</div>
<div class="a" style="left:442px;top:527px;width:1px;height:178px;background:#d9d9d9;"></div>
<div class="a" style="left:501px;top:527px;width:1px;height:178px;background:#d9d9d9;"></div>
<div class="a" style="left:561px;top:527px;width:1px;height:178px;background:#d9d9d9;"></div>
<div class="a" style="left:620px;top:527px;width:1px;height:178px;background:#d9d9d9;"></div>
<div class="a" style="left:680px;top:527px;width:1px;height:178px;background:#d9d9d9;"></div>
<div class="a" style="left:739px;top:527px;width:1px;height:178px;background:#d9d9d9;"></div>
<div class="a" style="left:799px;top:527px;width:1px;height:178px;background:#d9d9d9;"></div>
<div class="a" style="left:858px;top:527px;width:1px;height:178px;background:#d9d9d9;"></div>
<div class="a" style="left:918px;top:527px;width:1px;height:178px;background:#d9d9d9;"></div>
<div class="a" style="left:442px;top:542px;width:187px;height:18.6px;background:#a5a5a5;"></div>
<div class="t" style="left:635px;top:547.2px;font-size:11px;color:#404040;font-weight:bold;font-style:normal;">1577</div>
<div class="a" style="left:442px;top:561px;width:242px;height:18.6px;background:#ed7d31;"></div>
<div class="t" style="left:690px;top:565.8px;font-size:11px;color:#404040;font-weight:bold;font-style:normal;">2040</div>
<div class="a" style="left:442px;top:580px;width:430px;height:18.6px;background:#5b9bd5;"></div>
<div class="t" style="left:878px;top:584.4px;font-size:11px;color:#404040;font-weight:bold;font-style:normal;">3617</div>
<div class="a" style="left:442px;top:632px;width:93px;height:18.6px;background:#a5a5a5;"></div>
<div class="t" style="left:541px;top:636.7px;font-size:11px;color:#404040;font-weight:bold;font-style:normal;">786</div>
<div class="a" style="left:442px;top:651px;width:336px;height:18.6px;background:#ed7d31;"></div>
<div class="t" style="left:784px;top:655.3px;font-size:11px;color:#404040;font-weight:bold;font-style:normal;">2831</div>
<div class="a" style="left:442px;top:669px;width:430px;height:18.6px;background:#5b9bd5;"></div>
<div class="t" style="left:878px;top:673.9px;font-size:11px;color:#404040;font-weight:bold;font-style:normal;">3617</div>
<div class="t" style="left:407px;top:566.2px;font-size:11px;color:#404040;font-weight:bold;font-style:normal;">2020</div>
<div class="t" style="left:407px;top:654.2px;font-size:11px;color:#404040;font-weight:bold;font-style:normal;">2019</div>
<svg style="left:196px;top:662px" width="100" height="34">
<path d="M10 3 h22 a6 6 0 0 1 6 6 v6 h-8 v-5 h-18 z" fill="#fdb913"/>
<path d="M2 12 a8 8 0 0 1 8 -8 h2 v6 h-2 v12 h20 v-7 h8 v9 a8 8 0 0 1 -8 8 h-20 a8 8 0 0 1 -8 -8z" fill="#1d2b5e"/>
</svg>
<div class="t" style="left:239px;top:664.8px;font-size:29px;color:#1d2b5e;font-weight:normal;font-style:normal;transform:scaleX(1.3700);transform-origin:0 0;">djp</div>
<div class="a" style="left:329px;top:122.5px;width:108px;height:42px;background:#fbfbfb;border:2px solid #c0562f"></div>
<div class="t" style="left:333.5px;top:126.7px;font-size:14.5px;color:#333;font-weight:normal;font-style:normal;transform:scaleX(0.9513);transform-origin:0 0;">Slide Show</div>
<svg style="left:405px;top:129px" width="30" height="12"><path d="M0 0 h11 l-5.5 6z" fill="#222"/><path d="M18 1 l8 8 M26 1 l-8 8" stroke="#222" stroke-width="1.5"/></svg>
<div class="t" style="left:334px;top:146.1px;font-size:11.5px;color:#333;font-weight:normal;font-style:normal;transform:scaleX(0.9321);transform-origin:0 0;"><u>R</u>esume Slide Show</div>
<div class="a" style="left:1062px;top:0px;width:218px;height:717px;background:#000;"></div>
<svg style="left:1062.5px;top:0px" width="211.5" height="119" viewBox="0 0 211.5 119"><defs><clipPath id="c0"><rect width="211.5" height="119"/></clipPath></defs><g clip-path="url(#c0)">
<rect width="212" height="119" fill="#d7d7db"/>
<path d="M75 95 q5 -15 28 -18 h22 q25 3 30 18 l3 24 h-86z" fill="#c4c5cb"/>
<path d="M100 48 q12 -6 24 0 q6 16 4 34 l-6 10 h-20 l-6 -10 q-2 -18 4 -34z" fill="#263e6d"/>
<ellipse cx="112" cy="69" rx="9.5" ry="12" fill="#c9a48e"/>
<ellipse cx="112" cy="87" rx="6" ry="6" fill="#2a2a2a"/>
<path d="M108 92 l3 27 M116 92 l-2 27" stroke="#222" stroke-width="2"/>
<path d="M25 69 l72 10 M26 73 l68 8 M25 69 l6 50" stroke="#222" stroke-width="2.5" fill="none"/>
</g></svg>
<svg style="left:1062.5px;top:119px" width="211.5" height="118" viewBox="0 0 211.5 118"><defs><clipPath id="c119"><rect width="211.5" height="118"/></clipPath></defs><g clip-path="url(#c119)">
<rect width="212" height="118" fill="#c8c5bd"/>
<rect x="128" y="22" width="10" height="32" fill="#2d3a55"/><rect x="130" y="26" width="6" height="22" fill="#c9ccd6"/>
<path d="M130 82 q18 -4 46 10 l8 26 h-56z" fill="#1c1c22"/>
<path d="M36 118 q6 -22 40 -28 h40 q34 6 40 28z" fill="#5ea3dc"/>
<ellipse cx="98" cy="70" rx="32" ry="42" fill="#9a7560"/>
<path d="M66 52 q-2 -36 34 -40 q30 0 32 34 q-8 -18 -32 -16 q-24 0 -34 22z" fill="#1e1a1a"/>
<path d="M82 118 q16 -14 34 0z" fill="#3a2a25"/>
</g></svg>
<svg style="left:1062.5px;top:237px" width="211.5" height="118" viewBox="0 0 211.5 118"><defs><clipPath id="c237"><rect width="211.5" height="118"/></clipPath></defs><g clip-path="url(#c237)">
<rect width="212" height="118" fill="#d3cf9c"/>
<path d="M34 118 q8 -28 48 -36 h44 q40 8 48 36z" fill="#4f88c9"/>
<ellipse cx="107" cy="58" rx="32" ry="42" fill="#c9a792"/>
<path d="M74 52 q-6 -48 34 -48 q36 0 30 46 q-4 -26 -30 -28 q-28 2 -34 30z" fill="#2a2320"/>
<path d="M100 100 l7 18 l7 -18z" fill="#7fb7e6"/>
</g></svg>
<svg style="left:1062.5px;top:355px" width="211.5" height="119" viewBox="0 0 211.5 119"><defs><clipPath id="c355"><rect width="211.5" height="119"/></clipPath></defs><g clip-path="url(#c355)">
<rect width="212" height="119" fill="#c2c2c2"/>
<rect x="0" y="0" width="150" height="119" fill="#8f9192"/>
<linearGradient id="g4" x1="0" x2="1"><stop offset="0" stop-color="#f6f8fa"/><stop offset="0.35" stop-color="#eef4fa"/><stop offset="0.6" stop-color="#b9c6d2"/><stop offset="1" stop-color="#8f9192"/></linearGradient>
<rect x="0" y="0" width="60" height="119" fill="url(#g4)"/>
<rect x="65" y="0" width="72" height="30" fill="#3b3d40"/>
<rect x="140" y="0" width="72" height="119" fill="#c4c4c4"/>
<path d="M28 119 q8 -34 40 -44 h76 q36 10 46 44z" fill="#4b4838"/>
<ellipse cx="108" cy="62" rx="33" ry="44" fill="#8f6a5a"/>
<path d="M75 52 q-4 -40 34 -38 q32 2 32 36 q-6 -20 -32 -20 q-26 0 -34 22z" fill="#2b2522"/>
<path d="M78 85 q30 -6 62 0 l-4 34 h-54z" fill="#a9cadc"/>
</g></svg>
<div class="a" style="left:1088.5px;top:475px;width:159px;height:117px;overflow:hidden">
<svg style="left:0;top:0" width="159" height="117">
<rect width="159" height="117" fill="#b5b6ba"/>
<rect x="140" y="0" width="19" height="117" fill="#c6c7cb"/>
<path d="M0 117 q4 -40 50 -54 h70 q40 12 39 54z" fill="#c3c4d4"/>
<ellipse cx="98" cy="38" rx="28" ry="42" fill="#8b6b5c"/>
<path d="M70 38 q30 -8 58 0 v9 q-28 -6 -58 0z" fill="#5a5050"/>
<path d="M72 70 q26 20 54 -4 l2 12 q-28 18 -56 2z" fill="#58a795"/>
<rect x="60" y="103" width="26" height="8" fill="#3a4270"/>
<ellipse cx="150" cy="105" rx="28" ry="24" fill="#a58f86"/>
</svg></div>
<svg style="left:1062.5px;top:593px" width="211.5" height="116" viewBox="0 0 211.5 116"><defs><clipPath id="c593"><rect width="211.5" height="116"/></clipPath></defs><g clip-path="url(#c593)">
<rect width="211" height="116" fill="#bdbdbd"/>
<path d="M100 116 q0 -40 30 -48 q30 4 30 48z" fill="#2d2a28"/>
<ellipse cx="127" cy="100" rx="24" ry="24" fill="#7b6252"/>
<path d="M100 108 q28 -6 54 0 v8 h-54z" fill="#b2c9cc"/>
<path d="M152 90 q18 8 34 26 h-30z" fill="#9b8470"/>
<path d="M105 76 q16 -10 26 -6" stroke="#e0e0e0" stroke-width="3" fill="none"/>
</g></svg>
<div class="a" style="left:1019px;top:709px;width:255px;height:8px;background:#4a4a4a;"></div></body></html>
